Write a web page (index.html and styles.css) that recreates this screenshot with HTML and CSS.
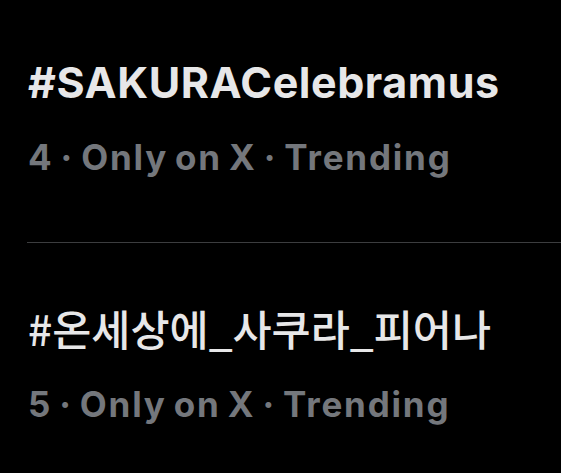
FILE: index.html
```html
<!DOCTYPE html>
<html>
<head>
<meta charset="utf-8">
<link rel="stylesheet" href="styles.css">
</head>
<body>
<main class="list">
  <section class="trend first">
    <div class="title">#SAKURACelebramus</div>
    <div class="meta">4 · Only on X · Trending</div>
  </section>
  <div class="divider"></div>
  <section class="trend second">
    <div class="title ko">#온세상에_사쿠라_피어나</div>
    <div class="meta">5 · Only on X · Trending</div>
  </section>
</main>
</body>
</html>
```
FILE: styles.css
```css
html, body {
  margin: 0;
  padding: 0;
  background: #000;
}
body {
  width: 561px;
  height: 473px;
  overflow: hidden;
}
.list {
  display: flex;
  flex-direction: column;
}
.trend {
  padding-left: 28px;
  display: flex;
  flex-direction: column;
}
.first {
  margin-top: 56px;
}
.title {
  font-family: Inter, "Noto Sans CJK KR", sans-serif;
  font-weight: 700;
  font-size: 43px;
  line-height: 52px;
  height: 52px;
  color: #e7e7e8;
  letter-spacing: 0.55px;
  white-space: nowrap;
}
.title.ko {
  font-family: "Noto Sans CJK KR", sans-serif;
  font-weight: 500;
  font-size: 42.5px;
  letter-spacing: 0;
}
.meta {
  font-family: Inter, sans-serif;
  font-weight: 700;
  font-size: 35px;
  line-height: 44px;
  height: 44px;
  color: #74777c;
  letter-spacing: 1.8px;
  word-spacing: -3px;
  margin-top: 27px;
  white-space: nowrap;
}
.divider {
  margin: 63px 0 0 27px;
  height: 1px;
  background: #3c3d3f;
}
.second {
  margin-top: 59px;
}
.second .meta {
  margin-top: 28px;
}
```
